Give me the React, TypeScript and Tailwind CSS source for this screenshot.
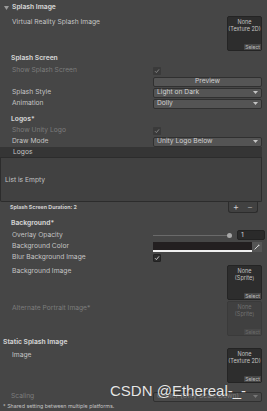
import React from "react";

const label = "text-[6.7px] leading-none text-[#c4c4c4]";
const dim = "text-[6.7px] leading-none text-[#7c7c7c]";
const bold = "text-[6.7px] leading-none font-bold text-[#d0d0d0]";

function Check({ disabled }: { disabled?: boolean }) {
  return (
    <div
      className={`w-[8px] h-[8px] rounded-[1px] flex items-center justify-center ${
        disabled ? "bg-[#3a3a3a]" : "bg-[#2b2b2b] border border-[#222]"
      }`}
    >
      <svg width="6" height="6" viewBox="0 0 6 6">
        <path
          d="M1 3.2 L2.4 4.6 L5 1.4"
          stroke={disabled ? "#8a8a8a" : "#d8d8d8"}
          strokeWidth="0.9"
          fill="none"
        />
      </svg>
    </div>
  );
}

function Dropdown({ text, disabled }: { text: string; disabled?: boolean }) {
  return (
    <div
      className={`w-[109px] h-[10px] rounded-[2px] border border-[#303030] ${
        disabled ? "bg-[#4a4a4a] text-[#7c7c7c]" : "bg-[#545454] text-[#d0d0d0]"
      } flex items-center justify-between pl-[3px] pr-[3px] text-[6.7px] leading-none`}
    >
      <span>{text}</span>
      <svg width="5" height="3" viewBox="0 0 5 3">
        <path d="M0 0 L5 0 L2.5 3 Z" fill={disabled ? "#777" : "#c4c4c4"} />
      </svg>
    </div>
  );
}

function ObjBox({ l1, l2, disabled }: { l1: string; l2: string; disabled?: boolean }) {
  return (
    <div
      className={`w-[35px] h-[35px] rounded-[2px] border flex flex-col items-center ${
        disabled ? "bg-[#404040] border-[#3a3a3a] text-[#707070]" : "bg-[#2d2d2d] border-[#242424] text-[#c4c4c4]"
      }`}
    >
      <div className="text-[5.5px] leading-[7px] mt-[2px]">{l1}</div>
      <div className="text-[5.5px] leading-[7px]">{l2}</div>
      <div className="flex-1" />
      <div className="self-end flex">
        <div
          className={`text-[5px] leading-[6px] px-[1px] rounded-tl-[1px] ${
            disabled ? "bg-[#484848] text-[#6a6a6a]" : "bg-[#474747] text-[#bdbdbd]"
          }`}
        >
          Select
        </div>
      </div>
    </div>
  );
}

function Row({
  h,
  children,
  right,
  pl = 12,
}: {
  h: number;
  children?: React.ReactNode;
  right?: React.ReactNode;
  pl?: number;
}) {
  return (
    <div className="flex items-center" style={{ height: h }}>
      <div className="w-[153px] shrink-0 flex items-center" style={{ paddingLeft: pl }}>
        {children}
      </div>
      <div className="flex items-center">{right}</div>
    </div>
  );
}

export default function App() {
  return (
    <div
      className="relative w-[267px] h-[411px] bg-[#464646] overflow-hidden text-[6.7px] leading-none"
      style={{ fontFamily: "Inter, 'Liberation Sans', sans-serif" }}
    >
      {/* header */}
      <div className="h-[15px] flex items-center pl-[4px] gap-[3px]">
        <svg width="5" height="4" viewBox="0 0 5 4">
          <path d="M0 0 L5 0 L2.5 4 Z" fill="#9a9a9a" />
        </svg>
        <span className={bold}>Splash Image</span>
      </div>

      {/* VR splash */}
      <div className="h-[37px] flex">
        <div className="flex-1 pl-[12px] pt-[4px]">
          <div className={label}>Virtual Reality Splash Image</div>
        </div>
        <div className="pr-[5px] pt-[1px]">
          <ObjBox l1="None" l2="(Texture 2D)" />
        </div>
      </div>

      <Row h={13} pl={11}>
        <span className={bold}>Splash Screen</span>
      </Row>
      <Row h={11} right={<Check disabled />}>
        <span className={dim}>Show Splash Screen</span>
      </Row>
      <Row
        h={11}
        right={
          <div className="w-[109px] h-[10px] rounded-[2px] bg-[#555555] border border-[#303030] flex items-center justify-center text-[6.7px] leading-none text-[#d0d0d0]">
            Preview
          </div>
        }
      />
      <Row h={11} right={<Dropdown text="Light on Dark" />}>
        <span className={label}>Splash Style</span>
      </Row>
      <Row h={11} right={<Dropdown text="Dolly" />}>
        <span className={label}>Animation</span>
      </Row>
      <div className="h-[4px]" />
      <Row h={12} pl={11}>
        <span className={bold}>Logos*</span>
      </Row>
      <Row h={11} right={<Check disabled />}>
        <span className={dim}>Show Unity Logo</span>
      </Row>
      <Row h={11} right={<Dropdown text="Unity Logo Below" />}>
        <span className={label}>Draw Mode</span>
      </Row>

      {/* list */}
      <div className="mr-[5px]">
        <div className="h-[11px] bg-[#353535] flex items-center pl-[13px] border-b border-[#2c2c2c]">
          <span className={label}>Logos</span>
        </div>
        <div className="h-[44px] bg-[#414141] border border-t-0 border-[#2c2c2c] rounded-b-[2px] flex items-center pl-[4px] pt-[2px]">
          <span className={label}>List is Empty</span>
        </div>
      </div>
      <div className="h-[11px] flex items-center justify-between pr-[9px]">
        <span className="pl-[10px] text-[5.3px] leading-none font-bold text-[#cfcfcf]">
          Splash Screen Duration: 2
        </span>
        <div className="w-[30px] h-[11px] -mt-[1px] bg-[#414141] border border-t-0 border-[#2c2c2c] rounded-b-[3px] flex items-center justify-around text-[9px] leading-none text-[#d0d0d0]">
          <span>+</span>
          <span className="text-[#9a9a9a]">−</span>
        </div>
      </div>

      <div className="h-[4px]" />
      <Row h={12} pl={11}>
        <span className={bold}>Background*</span>
      </Row>
      <Row
        h={12}
        right={
          <div className="flex items-center">
            <div className="w-[75px] h-[1px] bg-[#6a6a6a]" />
            <div className="w-[5px] h-[5px] rounded-full bg-[#a8a8a8] -ml-[1px]" />
            <div className="ml-[5px] w-[28px] h-[10px] rounded-[2px] bg-[#2a2a2a] border border-[#222] flex items-center pl-[3px] text-[6.7px] leading-none text-[#d0d0d0]">
              1
            </div>
          </div>
        }
      >
        <span className={label}>Overlay Opacity</span>
      </Row>
      <Row
        h={11}
        right={
          <div className="flex items-center">
            <div className="w-[99px] h-[10px] bg-[#231f20] flex flex-col justify-end">
              <div className="h-[2px] bg-[#f0f0f0]" />
            </div>
            <div className="w-[10px] h-[10px] bg-[#555] flex items-center justify-center">
              <svg width="6" height="6" viewBox="0 0 6 6">
                <path d="M0.6 5.4 L4 2" stroke="#d0d0d0" strokeWidth="1" />
                <path d="M3.6 1.2 L4.8 0.4 L5.6 1.2 L4.8 2.4 Z" fill="#d0d0d0" />
              </svg>
            </div>
          </div>
        }
      >
        <span className={label}>Background Color</span>
      </Row>
      <Row h={11} right={<Check />}>
        <span className={label}>Blur Background Image</span>
      </Row>

      <div className="h-[37px] flex pt-[2px]">
        <div className="flex-1 pl-[12px] pt-[3px]">
          <div className={label}>Background Image</div>
        </div>
        <div className="pr-[5px]">
          <ObjBox l1="None" l2="(Sprite)" />
        </div>
      </div>
      <div className="h-[36px] flex pt-[1px]">
        <div className="flex-1 pl-[12px] pt-[4px]">
          <div className={dim}>Alternate Portrait Image*</div>
        </div>
        <div className="pr-[5px]">
          <ObjBox l1="None" l2="(Sprite)" disabled />
        </div>
      </div>

      <div className="h-[12px] flex items-center pl-[3px]">
        <span className={bold}>Static Splash Image</span>
      </div>
      <div className="h-[37px] flex">
        <div className="flex-1 pl-[12px] pt-[4px]">
          <div className={label}>Image</div>
        </div>
        <div className="pr-[5px]">
          <ObjBox l1="None" l2="(Texture 2D)" />
        </div>
      </div>
      <div className="h-[6px]" />
      <Row h={11} pl={11} right={<Dropdown text="Center (Only Scale Down)" disabled />}>
        <span className={dim}>Scaling</span>
      </Row>
      <div className="h-[9px] flex items-center pl-[3px]">
        <span className="text-[5.3px] leading-none text-[#c4c4c4]">
          * Shared setting between multiple platforms.
        </span>
      </div>

      {/* watermark */}
      <div
        className="absolute left-[110px] top-[383px] text-[15px] leading-none text-[#e6e6e6]"
        style={{ fontFamily: "'Liberation Sans', Arial, sans-serif", textShadow: "0 0 1px rgba(0,0,0,0.4)" }}
      >
        CSDN @Ethereal-_-
      </div>
    </div>
  );
}
